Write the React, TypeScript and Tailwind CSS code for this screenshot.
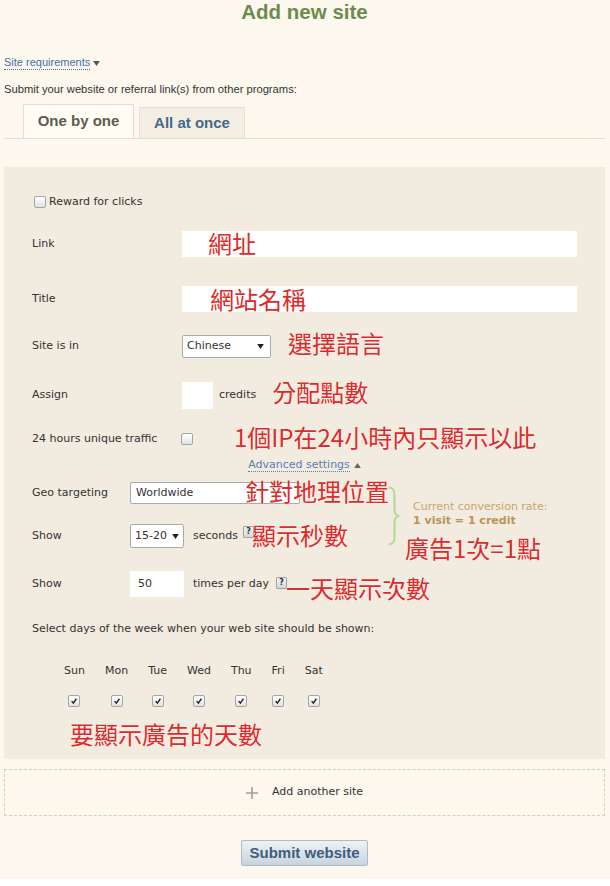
import React from "react";

const red =
  "relative font-['Noto_Sans_CJK_TC',sans-serif] text-[24px] leading-[30px] text-[#dd2a2a] whitespace-nowrap [text-shadow:0_0_2px_#fff]";

function Box({ checked = false }: { checked?: boolean }) {
  return (
    <span className="relative inline-flex h-[12px] w-[12px] shrink-0 items-center justify-center rounded-[2px] border border-[#a5a5a5] bg-gradient-to-b from-white to-[#e2e2e2]">
      {checked ? (
        <svg viewBox="0 0 10 10" className="h-[8px] w-[8px]">
          <path d="M2 5.2 L4.2 7.6 L8 2.2" fill="none" stroke="#222" strokeWidth="1.7" />
        </svg>
      ) : null}
    </span>
  );
}

function Arrow({ up = false, color = "#222" }: { up?: boolean; color?: string }) {
  return (
    <svg viewBox="0 0 8 6" className="h-[5px] w-[7px]">
      <path d={up ? "M0 6 L4 0 L8 6 Z" : "M0 0 L8 0 L4 6 Z"} fill={color} />
    </svg>
  );
}

function Help({ className }: { className: string }) {
  return (
    <span
      className={`inline-flex h-[12px] w-[11px] shrink-0 items-start justify-center rounded-[1px] border border-[#9ca3a8] bg-gradient-to-b from-[#f3f5f6] to-[#d3d8dc] text-[8px] font-bold leading-[10px] text-[#333] ${className}`}
    >
      ?
    </span>
  );
}

const days = ["Sun", "Mon", "Tue", "Wed", "Thu", "Fri", "Sat"];

export default function App() {
  return (
    <div className="min-h-[886px] bg-white font-['DejaVu_Sans',sans-serif] text-[11px] text-[#333]">
      <div className="bg-[#fcf8ee] pb-[13px] pl-[4px] pr-[5px]">
        <h1 className="text-center font-['Liberation_Sans',sans-serif] text-[20.5px] font-bold leading-[23px] text-[#6b8c4e]">
          Add new site
        </h1>

        <div className="mt-[33px] flex items-center font-['Liberation_Sans',sans-serif] text-[11px] leading-[13px]">
          <span className="border-b border-dotted border-[#4a74a8] text-[#4470a8]">
            Site requirements
          </span>
          <span className="ml-[3px]">
            <Arrow color="#555" />
          </span>
        </div>

        <p className="mt-[13px] font-['Liberation_Sans',sans-serif] text-[11.2px] leading-[12px] text-[#333]">
          Submit your website or referral link(s) from other programs:
        </p>

        <div className="mt-[9px] flex items-end border-b border-[#e5dfd2] pl-[19px] font-['Liberation_Sans',sans-serif] text-[15px] font-bold">
          <div className="flex h-[34px] w-[111px] items-center justify-center border border-b-0 border-[#e4ddcf] bg-[#fffcf4] text-[#5f5b50]">
            One by one
          </div>
          <div className="ml-[5px] flex h-[31px] w-[106px] items-center justify-center border border-b-0 border-[#e6e0d4] bg-[#f3eee4] text-[#46698a]">
            All at once
          </div>
        </div>

        <div className="mt-[28px] bg-[#f2ebdf] pb-[8px] pl-[28px] pr-[28px] pt-[25px]">
          <div className="flex h-[20px] items-center pl-[2px]">
            <Box />
            <span className="ml-[3px]">Reward for clicks</span>
          </div>

          <div className="mt-[19px] flex h-[26px] items-center">
            <span className="w-[150px] shrink-0">Link</span>
            <div className="relative h-[26px] w-[395px] bg-white">
              <span className={`${red} !absolute left-[26px] top-[-3px]`}>網址</span>
            </div>
          </div>

          <div className="mt-[29px] flex h-[26px] items-center">
            <span className="w-[150px] shrink-0">Title</span>
            <div className="relative h-[26px] w-[395px] bg-white">
              <span className={`${red} !absolute left-[28px] top-[-2px]`}>網站名稱</span>
            </div>
          </div>

          <div className="mt-[23px] flex h-[23px] items-center">
            <span className="w-[150px] shrink-0">Site is in</span>
            <div className="flex h-[23px] w-[89px] items-center justify-between rounded-[2px] border border-[#a9a9a9] bg-white pl-[4px] pr-[6px]">
              <span>Chinese</span>
              <Arrow />
            </div>
            <span className={`${red} -top-[4px] ml-[17px]`}>選擇語言</span>
          </div>

          <div className="mt-[24px] flex h-[27px] items-center">
            <span className="w-[150px] shrink-0">Assign</span>
            <div className="h-[27px] w-[31px] bg-white" />
            <span className="ml-[6px]">credits</span>
            <span className={`${red} -top-[4px] ml-[16px]`}>分配點數</span>
          </div>

          <div className="mt-[20px] flex h-[20px] items-center">
            <span className="w-[149px] shrink-0">24 hours unique traffic</span>
            <Box />
            <span className={`${red} -top-[2px] ml-[41px]`}>1個IP在24小時內只顯示以此</span>
          </div>

          <div className="mt-[9px] flex h-[14px] items-center justify-center">
            <span className="border-b border-dotted border-[#5a7fb0] leading-[13px] text-[#5a7fb0]">
              Advanced settings
            </span>
            <span className="ml-[4px]">
              <Arrow up color="#666" />
            </span>
          </div>

          <div className="mt-[10px] flex h-[66px] items-start">
            <div className="w-[356px] shrink-0">
              <div className="relative flex h-[22px] items-center">
                <span className="w-[98px] shrink-0">Geo targeting</span>
                <div className="flex h-[22px] w-[170px] items-center rounded-[2px] border border-[#a9a9a9] bg-white pl-[5px]">
                  Worldwide
                </div>
                <span className={`${red} !absolute left-[213px] top-[-6px]`}>針對地理位置</span>
              </div>
              <div className="mt-[20px] flex h-[24px] items-center">
                <span className="w-[98px] shrink-0">Show</span>
                <div className="flex h-[24px] w-[54px] items-center justify-between rounded-[2px] border border-[#a9a9a9] bg-white pl-[4px] pr-[4px]">
                  <span>15-20</span>
                  <Arrow />
                </div>
                <span className="ml-[9px]">seconds</span>
                <Help className="ml-[5px] self-start mt-[2px]" />
                <span className={`${red} -top-[1px] -ml-[2px]`}>顯示秒數</span>
              </div>
            </div>
            <svg viewBox="0 0 14 64" className="mt-[2px] h-[64px] w-[13px] shrink-0">
              <path
                d="M1 1.5 Q7 1.5 7 9 L7 25 Q7 32 12.5 32 Q7 32 7 39 L7 55 Q7 62.5 1 62.5"
                fill="none"
                stroke="#b7db9c"
                strokeWidth="2.4"
              />
            </svg>
            <div className="ml-[12px] shrink-0">
              <p className="mt-[18px] leading-[14px] text-[#c9a46f]">Current conversion rate:</p>
              <p className="font-bold leading-[14px] text-[#b99457]">1 visit = 1 credit</p>
              <p className={`${red} -top-[3px] -ml-[8px] mt-[8px]`}>廣告1次=1點</p>
            </div>
          </div>

          <div className="mt-[23px] flex h-[26px] items-center">
            <span className="w-[98px] shrink-0">Show</span>
            <div className="flex h-[26px] w-[54px] items-center bg-white pl-[8px]">50</div>
            <span className="ml-[9px]">times per day</span>
            <Help className="ml-[7px] self-start mt-[6px]" />
            <span className={`${red} -top-[1px] -ml-[1px] mt-[10px]`}>一天顯示次數</span>
          </div>

          <p className="mt-[25px] leading-[14px]">
            Select days of the week when your web site should be shown:
          </p>

          <div className="ml-[22px] mt-[28px] flex">
            {days.map((d) => (
              <div key={d} className="flex flex-col items-center px-[10px]">
                <span className="h-[14px] leading-[14px]">{d}</span>
                <span className="mt-[16px] flex h-[14px] items-center">
                  <Box checked />
                </span>
              </div>
            ))}
          </div>

          <p className={`${red} -top-[2px] ml-[38px] mt-[13px]`}>要顯示廣告的天數</p>
        </div>

        <div className="mt-[10px] flex h-[47px] items-center justify-center border border-dashed border-[#d6cdba]">
          <svg viewBox="0 0 12 12" className="h-[12px] w-[12px]">
            <path d="M6 0 V12 M0 6 H12" stroke="#a39d93" strokeWidth="1.6" />
          </svg>
          <span className="ml-[14px]">Add another site</span>
        </div>

        <div className="mt-[24px] flex justify-center">
          <button
            type="button"
            className="h-[26px] w-[127px] rounded-[2px] border border-[#aebbc6] bg-gradient-to-b from-[#eef2f5] to-[#c7d4de] font-['Liberation_Sans',sans-serif] text-[15px] font-bold text-[#3d5e7c]"
          >
            Submit website
          </button>
        </div>
      </div>
    </div>
  );
}
